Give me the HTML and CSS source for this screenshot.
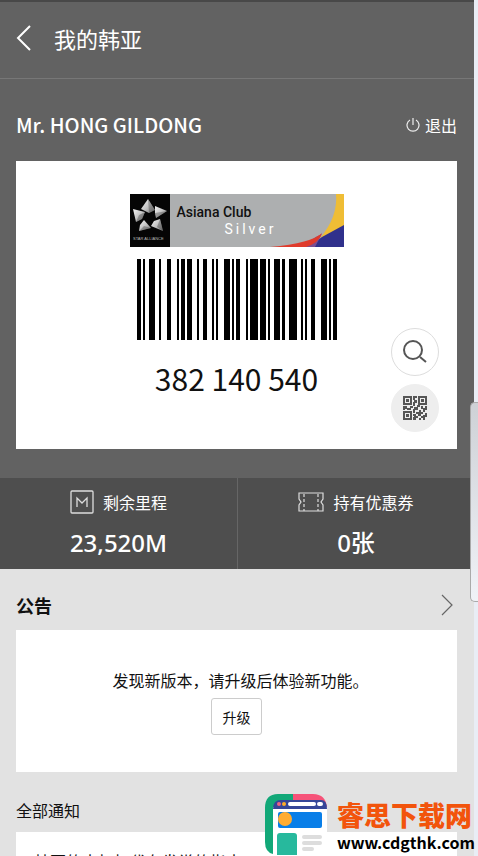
FILE: index.html
```html
<!DOCTYPE html>
<html lang="zh-CN">
<head>
<meta charset="utf-8">
<meta name="viewport" content="width=device-width, initial-scale=1">
<title>我的韩亚</title>
<link rel="stylesheet" href="styles.css">
</head>
<body>
<div class="screen">
  <header class="topbar">
    <button class="plain" type="button" aria-label="返回">
      <svg width="16" height="28" viewBox="0 0 16 28" fill="none" stroke="#fff" stroke-width="2"><path d="M14 2 2 14l12 12"/></svg>
    </button>
    <h1>我的韩亚</h1>
  </header>
  <main>
    <section class="member">
      <div class="member-row">
        <h2>Mr. HONG GILDONG</h2>
        <button class="plain logout" type="button">
          <svg width="14" height="16" viewBox="0 0 14 16" fill="none" stroke="#eee" stroke-width="1.2"><path d="M7 1v7M4 3a6 6 0 1 0 6 0"/></svg>
          退出
        </button>
      </div>
      <div class="card">
        <div class="banner">
          <svg class="alliance" viewBox="0 0 40 53" role="img" aria-label="Star Alliance">
            <defs>
              <linearGradient id="metal" x1="0" y1="0" x2="1" y2="1"><stop offset="0" stop-color="#f4f4f4"/><stop offset=".5" stop-color="#c4c4c4"/><stop offset="1" stop-color="#777"/></linearGradient>
            </defs>
            <rect width="40" height="53" fill="#050505"/>
            <g fill="url(#metal)">
              <path d="M18 5 25 16 19 19 11 15Z"/>
              <path d="M25 12 37 17 26 24 25 19Z"/>
              <path d="M30 25 33 37 21 32 24 27Z"/>
              <path d="M14 26 21 34 9 37 10 31Z"/>
              <path d="M3 15 15 18 12 25 6 28Z"/>
            </g>
            <path d="m18 5 7 11-6 3zM25 19l12-2-11 7zM30 25l3 12-6-4zM21 34 9 37l5-5zM15 18l-3 7-6 3 3-7z" fill="#333" opacity=".35"/>
            <text x="3" y="46" class="tiny">STAR ALLIANCE</text>
          </svg>
          <div class="club"><strong>Asiana Club</strong><span>Silver</span></div>
          <svg class="ribbon" viewBox="0 0 74 53" aria-hidden="true">
            <path d="M66 0h8v33L50 44Q68 23 66 0Z" fill="#efbd35"/>
            <path d="M38 53 52 43 74 31v22Z" fill="#30318c"/>
            <path d="M35 53Q40 45 52 40L45 53Z" fill="#7b4e91"/>
            <path d="M0 53Q42 49 52 39 49 49 36 53Z" fill="#df3b2c"/>
          </svg>
        </div>
        <svg class="barcode" viewBox="0 0 200 81" shape-rendering="crispEdges" role="img" aria-label="条形码">
          <path d="M0 0h4v81H0zM6 0h2v81H6zM12 0h6v81h-6zM22 0h2v81h-2zM30 0h4v81h-4zM40 0h2v81h-2zM44 0h4v81h-4zM50 0h5v81h-5zM60 0h2v81h-2zM66 0h4v81h-4zM75 0h2v81h-2zM79 0h2v81h-2zM87 0h6v81h-6zM95 0h2v81h-2zM99 0h4v81h-4zM109 0h2v81h-2zM113 0h8v81h-8zM123 0h6v81h-6zM131 0h2v81h-2zM137 0h6v81h-6zM145 0h3v81h-3zM152 0h8v81h-8zM164 0h2v81h-2zM168 0h2v81h-2zM174 0h4v81h-4zM184 0h6v81h-6zM192 0h2v81h-2zM196 0h4v81h-4z"/>
        </svg>
        <p class="number">382 140 540</p>
        <div class="tools">
          <button type="button" aria-label="放大">
            <svg width="24" height="24" viewBox="0 0 24 24" fill="none" stroke="#555" stroke-width="2"><circle cx="10" cy="10" r="9"/><path d="m17 17 6 5"/></svg>
          </button>
          <button class="filled" type="button" aria-label="二维码">
            <svg width="26" height="26" viewBox="0 0 26 26">
              <g fill="none" stroke="#555" stroke-width="2"><path d="M2 2h7v7H2zM17 2h7v7h-7zM2 17h7v7H2z"/></g>
              <path fill="#555" d="M4 4h3v3H4zM19 4h3v3h-3zM4 19h3v3H4zM11 1h4v2h-2v2h2v3h-2v3h-2V7h1V5h-1zM1 11h4v2h3v-2h3v2h-2v2H5v-1H3v1H1zM12 12h3v-2h3v2h-2v3h-3v3h-2v-4h1zM19 11h2v2h2v-2h2v4h-2v2h-2v-3h-2zM17 15h2v2h2v2h-2v2h-3v-2h-2v-2h3zM11 19h3v2h2v2h-2v2h-3v-3h1v-1h-1zM21 20h2v-2h2v4h-2v3h-2v-2h-2v-2h2zM17 23h2v2h-2z"/>
            </svg>
          </button>
        </div>
      </div>
    </section>
    <section class="stats">
      <div class="stat">
        <h3><svg width="24" height="24" viewBox="0 0 24 24" fill="none" stroke="#ddd" stroke-width="1.3"><rect x="1" y="1" width="22" height="22" rx="1"/><path d="M7 17V8l5 5 5-5v9"/></svg>剩余里程</h3>
        <p>23,520M</p>
      </div>
      <div class="stat">
        <h3><svg width="26" height="20" viewBox="0 0 26 20" fill="none" stroke="#ddd" stroke-width="1.2"><path d="M1 1h24v6l-2 3 2 3v6H1v-6l2-3-2-3z"/><path d="M6 2v17M20 2v17" stroke-dasharray="3 2"/></svg>持有优惠券</h3>
        <p>0张</p>
      </div>
    </section>
    <section class="news">
      <div class="news-head">
        <h2>公告</h2>
        <a href="#notices" aria-label="更多公告"><svg width="12" height="22" viewBox="0 0 12 22" fill="none" stroke="#666" stroke-width="1.2"><path d="m1 1 10 10L1 21"/></svg></a>
      </div>
      <div class="notice">
        <p>发现新版本，请升级后体验新功能。</p>
        <button type="button">升级</button>
      </div>
      <h2 class="all" id="notices">全部通知</h2>
      <article class="entry">韩亚的大标扣代在发常的指南</article>
    </section>
  </main>
</div>
<div class="handle"></div>
<aside class="site">
  <svg width="62" height="61" viewBox="0 0 62 61" aria-hidden="true">
    <path d="M13 0h17v14H8v46Q0 58 0 48V14Q0 0 13 0Z" fill="#12a878"/>
    <path d="M28 0h20q13 0 14 14H28Z" fill="#f65379"/>
    <path d="M8 13h54v48H8Z" fill="#fff"/>
    <path d="M8 15q0-9 8-9h40q6 0 6 9Z" fill="#354698"/>
    <circle cx="14" cy="10" r="2" fill="#ef6480"/><circle cx="19" cy="10" r="2" fill="#ffad27"/>
    <path d="M25 10h24M54 10h2" stroke="#fff" stroke-width="4" stroke-linecap="round"/>
    <rect x="13" y="18" width="44" height="16" rx="2" fill="#087ee8"/>
    <circle cx="20" cy="25" r="7" fill="#ffac32"/>
    <path d="M12 61V42q0-3 3-3h14q3 0 3 3v19Z" fill="#27b99d"/>
    <path d="M39 43h16M39 49h16M39 55h8" stroke="#ddd" stroke-width="4" stroke-linecap="round"/>
  </svg>
  <div><strong>睿思下载网</strong><span>www.cdgthk.com</span></div>
</aside>
</body>
</html>
```
FILE: styles.css
```css
* { box-sizing: border-box; }
body {
  margin: 0;
  height: 100vh;
  overflow: hidden;
  position: relative;
  background: #e9edf5;
  color: #111;
  font: 16px/24px "Noto Sans CJK SC", sans-serif;
}
h1, h2, h3, p { margin: 0; font-weight: 400; }
button { font: inherit; color: inherit; padding: 0; cursor: pointer; }
svg { display: block; flex: none; }
.plain { border: 0; background: none; }
.screen {
  margin-right: 4px;
  height: 100%;
  overflow: hidden;
  background: #e2e2e2;
}
.topbar {
  display: flex;
  align-items: center;
  gap: 22px;
  height: 79px;
  padding: 0 16px 4px;
  border-top: 2px solid #484848;
  border-bottom: 1px solid #777;
  background: #626262;
  color: #fff;
}
.topbar h1 { font-size: 22px; line-height: 32px; }
.member { padding: 0 17px 29px 16px; background: #626262; color: #fff; }
.member-row {
  display: flex;
  align-items: center;
  justify-content: space-between;
  height: 82px;
  padding-top: 10px;
}
.member-row h2 { font-size: 20px; font-weight: 500; line-height: 30px; }
.logout { display: flex; align-items: center; gap: 5px; }
.card {
  position: relative;
  display: flex;
  flex-direction: column;
  align-items: center;
  height: 288px;
  padding-top: 33px;
  background: #fff;
  color: #111;
}
.banner { position: relative; display: flex; width: 214px; height: 53px; background: #adafb0; }
.alliance { width: 40px; height: 53px; }
.tiny { font: 4px "Liberation Sans", sans-serif; fill: #bbb; }
.club { display: flex; flex-direction: column; padding: 10px 0 0 7px; font-family: Roboto, sans-serif; line-height: 17px; }
.club strong { font-size: 14px; font-weight: 500; }
.club span { padding-left: 48px; font-size: 14px; letter-spacing: 3px; color: #fff; }
.ribbon { position: absolute; right: 0; bottom: 0; width: 74px; height: 53px; }
.barcode { width: 200px; height: 81px; margin-top: 12px; }
.number { margin-top: 17px; font-size: 30px; line-height: 42px; }
.tools { position: absolute; right: 18px; bottom: 17px; display: grid; gap: 8px; }
.tools button {
  display: grid;
  place-items: center;
  width: 48px;
  height: 48px;
  border: 1px solid #ddd;
  border-radius: 50%;
  background: #fff;
}
.tools .filled { border-color: #eee; background: #eee; }
.stats { display: grid; grid-template-columns: 1fr 1fr; height: 91px; background: #4e4e4e; color: #fff; }
.stat { display: flex; flex-direction: column; align-items: center; padding-top: 12px; }
.stat + .stat { border-left: 1px solid #666; }
.stat h3 { display: flex; align-items: center; gap: 9px; font-size: 16px; line-height: 24px; }
.stat p { margin-top: 13px; font: 500 24px/32px "Noto Sans", "Noto Sans CJK SC", sans-serif; }
.news { padding: 0 17px 0 16px; }
.news-head { display: flex; align-items: center; justify-content: space-between; height: 61px; padding: 10px 4px 0 0; }
.news-head h2 { font-size: 18px; font-weight: 700; }
.notice { display: flex; flex-direction: column; align-items: center; height: 142px; padding-top: 38px; background: #fff; }
.notice p { padding-left: 8px; }
.notice button {
  width: 51px;
  height: 37px;
  margin-top: 6px;
  border: 1px solid #ccc;
  border-radius: 3px;
  background: #fff;
  font-size: 14px;
}
.all { height: 60px; padding-top: 26px; font-size: 16px; }
.entry { padding: 17px 18px; background: #fff; }
.handle {
  position: absolute;
  top: 402px;
  right: 0;
  width: 8px;
  height: 200px;
  border: 1px solid #aaa;
  border-right: 0;
  border-radius: 5px 0 0 5px;
  background: linear-gradient(#ced1d6, #f0f2f7);
}
.site { position: absolute; right: 3px; bottom: 1px; display: flex; gap: 10px; }
.site div { display: flex; flex-direction: column; padding-top: 6px; }
.site strong { color: #f2540c; font-size: 27px; font-weight: 900; line-height: 30px; }
.site span { color: #000; font-size: 16px; font-weight: 700; line-height: 24px; }
```
